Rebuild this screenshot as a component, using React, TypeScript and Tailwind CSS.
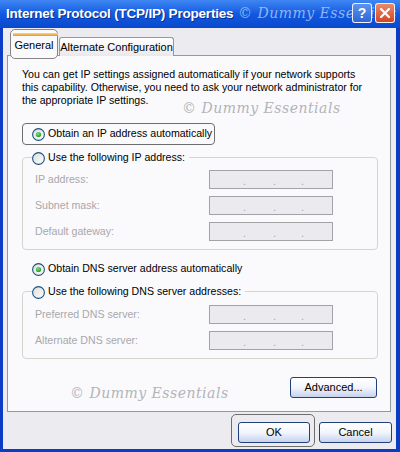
import React from "react";

// XP style radio button drawn as svg
const Radio: React.FC<{ checked?: boolean }> = ({ checked }) => (
  <svg width="13" height="13" viewBox="0 0 13 13" className="shrink-0">
    <defs>
      <linearGradient id="radioFill" x1="0" y1="0" x2="1" y2="1">
        <stop offset="0" stopColor="#DCDCD7" />
        <stop offset="1" stopColor="#FFFFFF" />
      </linearGradient>
      <radialGradient id="radioDot" cx="0.4" cy="0.35" r="0.7">
        <stop offset="0" stopColor="#7CE07C" />
        <stop offset="1" stopColor="#1E9A1E" />
      </radialGradient>
    </defs>
    <circle cx="6.5" cy="6.5" r="5.9" fill="url(#radioFill)" stroke="#1C5180" strokeWidth="1.1" />
    {checked ? <circle cx="6.5" cy="6.5" r="2.6" fill="url(#radioDot)" /> : null}
  </svg>
);

const IpBox: React.FC = () => (
  <div className="w-[124px] h-[19px] border border-[#A3A3A6] bg-[#EBEAEE] relative text-[#A8A7AB] text-[11px] leading-none">
    <span className="absolute left-[33px] top-[5px]">.</span>
    <span className="absolute left-[63px] top-[5px]">.</span>
    <span className="absolute left-[91px] top-[5px]">.</span>
  </div>
);

const FieldRow: React.FC<{ label: string }> = ({ label }) => (
  <div className="flex items-center h-[19px]">
    <span className="w-[174px] text-[#A8A7AB]">{label}</span>
    <IpBox />
  </div>
);

const XpButton: React.FC<{ label: string; width: string }> = ({ label, width }) => (
  <button
    className={`${width} h-[21px] rounded-[3px] border border-[#21417A] bg-gradient-to-b from-white via-[#F2F5FC] to-[#C6D2EE] text-[11px] text-black leading-none`}
  >
    {label}
  </button>
);

const Watermark: React.FC<{ className: string }> = ({ className }) => (
  <span
    className={`absolute whitespace-nowrap italic tracking-[0.5px] text-[14px] leading-none font-['DejaVu_Serif',serif] select-none ${className}`}
  >
    © Dummy Essentials
  </span>
);

export default function App() {
  return (
    <div className="w-[400px] h-[452px] flex flex-col bg-[#0A3CC6] font-['Liberation_Sans',Arial,sans-serif] text-[10.6px] text-black">
      {/* title bar */}
      <div className="relative h-[28px] shrink-0 flex items-center pl-[6px] bg-gradient-to-b from-[#3F86F3] via-[#1059E0] to-[#0B48CD] overflow-hidden">
        <span className="text-white font-bold text-[13.5px] tracking-[-0.2px] whitespace-nowrap [text-shadow:1px_1px_0_#0A2F8F]">
          Internet Protocol (TCP/IP) Properties
        </span>
        <Watermark className="left-[238px] top-[6px] text-[#BFD2F5]/75" />
        <div className="absolute right-[5px] top-[3px] flex gap-[3px]">
          <div className="w-[20px] h-[20px] rounded-[3px] border border-white/90 bg-gradient-to-b from-[#5E93F0] to-[#2E66D6] flex items-center justify-center text-white font-bold text-[14px] leading-none">
            ?
          </div>
          <div className="w-[20px] h-[20px] rounded-[3px] border border-white/90 bg-gradient-to-b from-[#E98A6A] to-[#D2441F] flex items-center justify-center">
            <svg width="12" height="12" viewBox="0 0 12 12">
              <path d="M2 2 L10 10 M10 2 L2 10" stroke="white" strokeWidth="2.2" strokeLinecap="round" />
            </svg>
          </div>
        </div>
      </div>

      {/* dialog body */}
      <div className="flex-1 flex flex-col ml-[3px] mr-[4px] mb-[3px] bg-[#ECEBEF] pl-[4px] pt-[1px]">
        {/* tabs */}
        <div className="relative z-10 flex items-start h-[27px] pl-[3px]">
          <div className="relative w-[48px] h-[30px] rounded-[5px] border border-[#858585] bg-[#FAFAFD] flex items-center justify-center pt-[1px]">
            <div className="absolute top-[3px] left-[2px] right-[-1px] h-[3px] bg-gradient-to-b from-[#FFD67A] to-[#E6981F]" />
            <span className="mt-[1px] text-[11px]">General</span>
          </div>
          <div className="mt-[8px] ml-[1px] w-[115px] h-[19px] border border-b-0 border-[#919B9C] rounded-t-[3px] bg-gradient-to-b from-white to-[#E9E9EC] flex items-center justify-center whitespace-nowrap text-[11px]">
            Alternate Configuration
          </div>
        </div>

        {/* tab page */}
        <div className="relative -mt-[1px] w-[384px] h-[357px] border border-[#919B9C] bg-[#FAFAFD] flex flex-col pt-[12px]">
          <p className="pl-[14px] leading-[13px] whitespace-nowrap">
            You can get IP settings assigned automatically if your network supports
            <br />
            this capability. Otherwise, you need to ask your network administrator for
            <br />
            the appropriate IP settings.
          </p>
          <Watermark className="left-[174px] top-[45px] text-[#B3B3B8]" />

          <div className="mt-[16px] ml-[14px] w-[193px] h-[22px] rounded-[4px] border border-[#6E6E6E] flex items-center pl-[9px] gap-[3px] whitespace-nowrap">
            <Radio checked />
            <span>Obtain an IP address automatically</span>
          </div>

          {/* manual IP group */}
          <div className="relative mt-[12px] ml-[14px] w-[356px] h-[93px] rounded-[4px] border border-[#D5D4CF] flex flex-col gap-[7px] pt-[12px] pl-[12px]">
            <div className="absolute -top-[11px] left-[9px] h-[22px] flex items-center gap-[3px] bg-[#FAFAFD] pr-[4px] whitespace-nowrap">
              <Radio />
              <span>Use the following IP address:</span>
            </div>
            <FieldRow label="IP address:" />
            <FieldRow label="Subnet mask:" />
            <FieldRow label="Default gateway:" />
          </div>

          <div className="mt-[8px] ml-[24px] h-[22px] flex items-center gap-[3px] whitespace-nowrap">
            <Radio checked />
            <span>Obtain DNS server address automatically</span>
          </div>

          {/* manual DNS group */}
          <div className="relative mt-[11px] ml-[14px] w-[356px] h-[68px] rounded-[4px] border border-[#D5D4CF] flex flex-col gap-[7px] pt-[13px] pl-[12px]">
            <div className="absolute -top-[11px] left-[9px] h-[22px] flex items-center gap-[3px] bg-[#FAFAFD] pr-[4px] whitespace-nowrap">
              <Radio />
              <span>Use the following DNS server addresses:</span>
            </div>
            <FieldRow label="Preferred DNS server:" />
            <FieldRow label="Alternate DNS server:" />
          </div>

          <div className="mt-[18px] flex justify-end pr-[13px]">
            <XpButton label="Advanced..." width="w-[87px]" />
          </div>
          <Watermark className="left-[62px] top-[330px] text-[#B3B3B8]" />
        </div>

        {/* dialog buttons */}
        <div className="flex items-start mt-[2px] pl-[224px] gap-[4px]">
          <div className="w-[84px] h-[33px] rounded-[5px] border border-[#6E6E6E] pl-[6px] pt-[7px]">
            <XpButton label="OK" width="w-[72px]" />
          </div>
          <div className="pt-[8px]">
            <XpButton label="Cancel" width="w-[73px]" />
          </div>
        </div>
      </div>
    </div>
  );
}
